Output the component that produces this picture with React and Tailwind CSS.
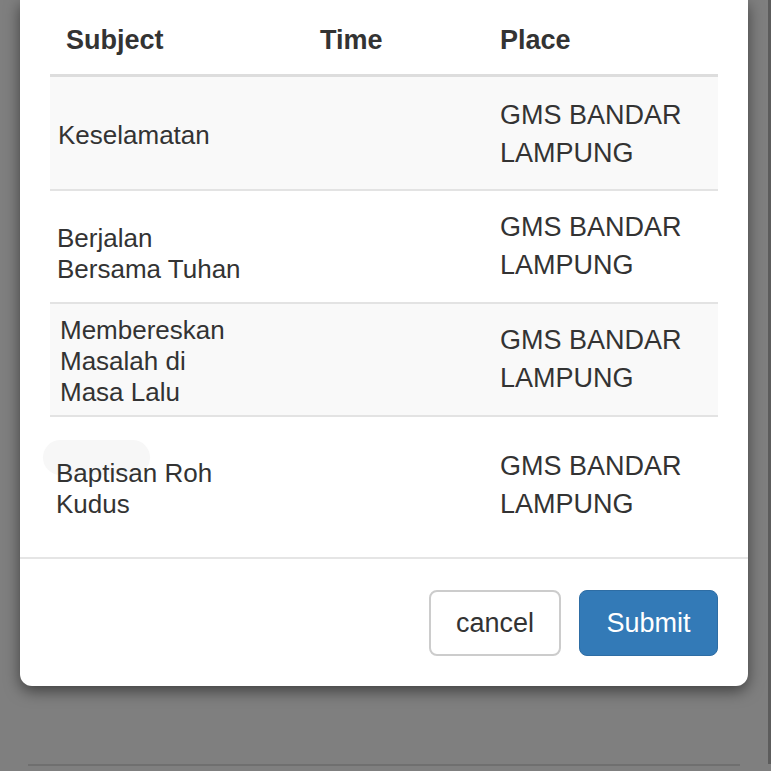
import React from "react";

const rows = [
  { subject: ["Keselamatan"], sx: "ml-[8px]", st: "pt-[43px]", pt: "pt-[19px]", h: "h-[114px]", bg: "bg-[#f9f9f9]" },
  { subject: ["Berjalan", "Bersama Tuhan"], sx: "ml-[7px]", st: "pt-[32px]", pt: "pt-[17px]", h: "h-[113px]", bg: "bg-white" },
  { subject: ["Membereskan", "Masalah di", "Masa Lalu"], sx: "ml-[10px]", st: "pt-[11px]", pt: "pt-[17px]", h: "h-[113px]", bg: "bg-[#f9f9f9]" },
  { subject: ["Baptisan Roh", "Kudus"], sx: "ml-[6px]", st: "pt-[41px]", pt: "pt-[30px]", h: "h-[140px]", bg: "bg-white", last: true },
];

const App = () => {
  return (
    <div
      className="w-[771px] h-[771px] bg-[#7f7f7f] overflow-hidden flex text-[#333333]"
      style={{ fontFamily: '"Liberation Sans", Arial, sans-serif' }}
    >
      <div className="flex-1 flex flex-col">
        <div className="ml-[20px] w-[728px] h-[686px] bg-white rounded-b-[12px] shadow-[0_5px_15px_rgba(0,0,0,0.5)] flex flex-col">
          <div className="px-[30px] flex flex-col">
            {/* header */}
            <div className="flex h-[77px] border-b-[3px] border-[#dddddd] font-bold text-[27px] leading-[38px]">
              <div className="w-[254px] pl-[16px] pt-[21px]">Subject</div>
              <div className="w-[180px] pl-[16px] pt-[21px]">Time</div>
              <div className="flex-1 pl-[16px] pt-[21px]">Place</div>
            </div>
            {rows.map((r, i) => (
              <div
                key={i}
                className={`relative flex ${r.h} ${r.bg} ${r.last ? "" : "border-b-2 border-[#e3e3e3]"}`}
              >
                {r.last && (
                  <div className="absolute left-[-7px] top-[23px] w-[107px] h-[35px] rounded-full bg-[#f7f7f7]" />
                )}
                <div className={`relative w-[254px] ${r.st} text-[26px] leading-[31px] whitespace-nowrap`}>
                  <div className={r.sx}>
                    {r.subject.map((s, j) => (
                      <div key={j}>{s}</div>
                    ))}
                  </div>
                </div>
                <div className="w-[180px]" />
                <div className={`flex-1 pl-[16px] ${r.pt} text-[27px] leading-[38px] whitespace-nowrap`}>
                  <div>GMS BANDAR</div>
                  <div>LAMPUNG</div>
                </div>
              </div>
            ))}
          </div>
          {/* footer */}
          <div className="border-t-2 border-[#e5e5e5] flex justify-end gap-[18px] px-[30px] pt-[31px]">
            <button className="w-[132px] h-[66px] rounded-[8px] border-2 border-[#cccccc] bg-white text-[27px] text-[#333333]">
              cancel
            </button>
            <button className="w-[139px] h-[66px] rounded-[8px] border border-[#2e6da4] bg-[#337ab7] text-[27px] text-white">
              Submit
            </button>
          </div>
        </div>
        <div className="mt-[78px] ml-[28px] w-[712px] h-[2px] bg-[#6f6f6f]" />
      </div>
      <div className="w-[3px] h-[764px] bg-[#5c5c5c]" />
    </div>
  );
};

export default App;
